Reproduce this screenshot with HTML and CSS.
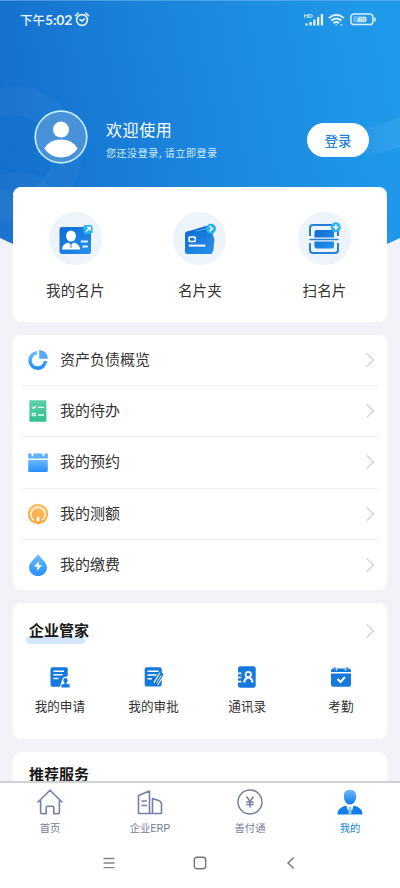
FILE: index.html
```html
<!DOCTYPE html>
<html lang="zh-CN">
<head>
<meta charset="utf-8">
<meta name="viewport" content="width=device-width, initial-scale=1">
<title>我的</title>
<link rel="stylesheet" href="styles.css">
</head>
<body>
<svg class="defs" width="0" height="0" aria-hidden="true">
  <defs>
    <linearGradient id="blue" x1="0" y1="0" x2="1" y2="1"><stop offset="0" stop-color="#0f6cd0"/><stop offset="1" stop-color="#2691ec"/></linearGradient>
    <linearGradient id="sky" x1="0" y1="0" x2="0" y2="1"><stop offset="0" stop-color="#6bb9ff"/><stop offset="1" stop-color="#2590fc"/></linearGradient>
    <linearGradient id="green" x1="0" y1="0" x2="0" y2="1"><stop offset="0" stop-color="#5fd0a9"/><stop offset="1" stop-color="#31c08f"/></linearGradient>
    <linearGradient id="gold" x1="0" y1="0" x2="0" y2="1"><stop offset="0" stop-color="#fbc06a"/><stop offset="1" stop-color="#fba638"/></linearGradient>
    <linearGradient id="user" x1="0" y1="0" x2="0" y2="1"><stop offset="0" stop-color="#6fbbfb"/><stop offset="1" stop-color="#0f7ce6"/></linearGradient>
  </defs>
</svg>
<div class="screen">
  <main class="content">
    <svg class="backdrop" viewBox="0 0 400 300" aria-hidden="true">
      <defs>
        <linearGradient id="hero" gradientUnits="userSpaceOnUse" x1="0" y1="170" x2="390" y2="100"><stop offset="0" stop-color="#146fcd"/><stop offset=".5" stop-color="#1b86dd"/><stop offset="1" stop-color="#2099ea"/></linearGradient>
        <linearGradient id="fade" gradientUnits="userSpaceOnUse" x1="330" y1="0" x2="400" y2="0"><stop offset="0" stop-color="#fff" stop-opacity="0"/><stop offset="1" stop-color="#fff" stop-opacity=".07"/></linearGradient>
        <clipPath id="wedge"><path d="M0 0H400V238L200 330L0 238Z"/></clipPath>
      </defs>
      <g clip-path="url(#wedge)">
        <rect width="400" height="300" fill="url(#hero)"/>
        <circle cx="14" cy="154" r="53" fill="none" stroke="#fff" stroke-opacity=".03" stroke-width="29"/>
        <circle cx="18" cy="218" r="46" fill="#fff" fill-opacity=".03"/>
        <path d="M330 133Q370 130 400 117V147Q370 158 330 155Z" fill="url(#fade)"/>
      </g>
      <path d="M0 .5H400" stroke="#6db5ee" stroke-opacity=".6"/>
    </svg>

    <div class="status">
      <span class="time">下午<b>5:02</b></span>
      <svg width="16" height="15" viewBox="0 0 16 15" fill="none" stroke="#e4f3ff" stroke-width="1.6" stroke-linecap="round"><circle cx="8" cy="8" r="5.4"/><path d="M1.5 3.600 4.300 1.200M14.500 3.600 11.700 1.200M6 7.600 8 9l2.400-1.800"/></svg>
      <span class="spacer"></span>
      <svg class="signal" width="20" height="14" viewBox="0 0 20 14" fill="#e4f3ff"><text x="-.5" y="4.800">HD</text><rect x="1.500" y="10.400" width="2.200" height="2.100"/><rect x="5.400" y="9" width="2.300" height="3.500"/><rect x="9.200" y="6.600" width="2.300" height="5.900"/><rect x="13" y="4" width="2.300" height="8.500"/><rect x="16.800" y="1" width="2.300" height="11.500"/></svg>
      <svg class="wifi" width="17" height="14" viewBox="0 0 17 14" fill="none" stroke="#e4f3ff" stroke-width="1.900"><path d="M.800 5.100Q8.300-1.500 15.900 5.100M3.200 7.700Q8.300 3.300 13.500 7.700M5.600 10.200Q8.300 7.800 11 10.200"/><circle cx="8.300" cy="12" r=".8" fill="#e4f3ff" stroke="none"/><path d="M12.200 12h2.500" stroke-width="1.500" opacity=".65"/></svg>
      <svg class="battery" width="26" height="13" viewBox="0 0 26 13"><rect x=".9" y="1" width="22" height="10.600" rx="3.200" fill="none" stroke="#d5efff" stroke-width="1.500"/><rect x="24" y="4.400" width="1.600" height="4" rx=".7" fill="#e4f3ff"/><rect x="3" y="3" width="13" height="6.600" rx="1.500" fill="#fff" opacity=".3"/><text x="7.500" y="9.200" fill="#f4faff">60</text></svg>
    </div>

    <section class="profile">
      <svg width="54" height="54" viewBox="0 0 54 54"><circle cx="27" cy="27" r="25.800" fill="#4792d9" stroke="#c5ecff" stroke-width="1.700"/><circle cx="27" cy="19.600" r="8" fill="#fff"/><path d="M10.300 38.500Q15.500 29.400 27 29.400Q38.500 29.400 43.700 38.500Q37.500 47.600 27 47.600Q16.500 47.600 10.300 38.500Z" fill="#fff"/></svg>
      <div class="who">
        <h1>欢迎使用</h1>
        <p>您还没登录, 请立即登录</p>
      </div>
      <button class="login">登录</button>
    </section>

    <section class="card shortcuts">
      <a class="shortcut">
        <span class="disc"><svg width="36" height="36" viewBox="0 0 36 36"><rect x="2.500" y="6" width="31.500" height="27" rx="2.800" fill="url(#blue)"/><ellipse cx="14" cy="15" rx="4.900" ry="5.600" fill="#fff"/><path d="M5 28.500Q5 23 11.500 21.500L14 24l2.500-2.500Q23 23 23 28.500Z" fill="#fff"/><path d="M14 23.500v3.500" stroke="#59a9ef" stroke-width="1.200"/><path d="M23.800 20.600h7M25.500 25.500h5.300" stroke="#e4f3ff" stroke-width="2"/><rect x="26.500" y="4" width="9" height="9" rx="2" fill="#2bb4f3"/><path d="M29 10.500 33 6.500M30 6.300h3.200v3.200" fill="none" stroke="#fff" stroke-width="1.300"/></svg></span>
        <span>我的名片</span>
      </a>
      <a class="shortcut">
        <span class="disc"><svg width="36" height="36" viewBox="0 0 36 36"><path d="M4 11 23 5.200Q28.500 4.500 29.500 9L30 13H4Z" fill="#116dd2"/><path d="M13 10.500 25 7.500" stroke="#67b3f3" stroke-width="1"/><path d="M25 9.500 30.500 12 32.500 19Q31.500 23.500 31.500 29L29.500 33H24Z" fill="#2888df"/><rect x="3" y="10.500" width="26.500" height="22.500" rx="2.500" fill="url(#blue)"/><rect x="7" y="16" width="6.300" height="4.500" rx="1" fill="none" stroke="#fff" stroke-width="1.600"/><path d="M7 24.600H23.300" stroke="#fff" stroke-width="2"/><circle cx="29" cy="7.700" r="5" fill="#2bb4f3"/><path d="M27.500 5.200 30.500 7.700 27.500 10.200" fill="none" stroke="#fff" stroke-width="1.500"/></svg></span>
        <span>名片夹</span>
      </a>
      <a class="shortcut">
        <span class="disc"><svg width="36" height="36" viewBox="0 0 36 36"><path d="M4 15V7Q4 4 7 4H29Q32 4 32 7v8M4 22v7Q4 32 7 32H29Q32 32 32 29v-7" fill="none" stroke="#2680d8" stroke-width="2"/><path d="M8.500 10.500 10 9H26.500L28 10.500V16.500H8.500ZM8.500 20.500H28V26L26.500 27.500H10L8.500 26Z" fill="url(#blue)"/><path d="M3.500 18.500H32.500" stroke="#2680d8" stroke-width="1.500"/><circle cx="29.800" cy="6.300" r="5" fill="#2bb4f3"/><path d="M27 6.300h5.600M29.800 3.500v5.600" stroke="#fff" stroke-width="1.600"/></svg></span>
        <span>扫名片</span>
      </a>
    </section>

    <section class="card list">
      <a class="row"><svg width="22" height="22" viewBox="0 0 22 22"><path d="M10 3.800A7.700 7.700 0 1 0 18.400 12" fill="none" stroke="url(#sky)" stroke-width="3.600"/><path d="M12.200.900Q20.500 1.500 21 9.800H12.200Z" fill="#58a9f4"/></svg><span>资产负债概览</span><i class="chevron"></i></a>
      <a class="row"><svg width="22" height="22" viewBox="0 0 22 22"><rect x="2.400" y=".300" width="17" height="21.400" rx="1" fill="url(#green)"/><path d="M5 7 6.500 8.500 9 6M5.400 13.400h2.800v2.200H5.400zM11 7.400h6M11 15h6" fill="none" stroke="#e8fff6" stroke-width="1.400"/></svg><span>我的待办</span><i class="chevron"></i></a>
      <a class="row"><svg width="22" height="22" viewBox="0 0 22 22"><path d="M1.200 2.500H20.800V7.500H1.200Z" fill="#5eb2fc"/><path d="M1.200 8.900H20.800V19.500Q20.800 21 19.300 21H2.700Q1.200 21 1.200 19.500Z" fill="url(#sky)"/><path d="M5.500 2v2.400M16.500 2v2.400" stroke="#fff" stroke-width="1.800" stroke-linecap="round"/></svg><span>我的预约</span><i class="chevron"></i></a>
      <a class="row"><svg width="22" height="22" viewBox="0 0 22 22"><circle cx="11" cy="11" r="10.200" fill="url(#gold)"/><path d="M7 17.300A7.200 7.200 0 1 1 15 17.300" fill="none" stroke="#fff1d7" stroke-width="1.700"/><path d="M9.600 18.200V15Q9.600 13.600 11 13.600t1.400 1.400v3.200Z" fill="#fff"/></svg><span>我的测额</span><i class="chevron"></i></a>
      <a class="row"><svg width="22" height="22" viewBox="0 0 22 22"><path d="M11 .200C13.500 4 20 8.500 20 13.400A9 8.700 0 0 1 2 13.400C2 8.500 8.500 4 11 .200Z" fill="url(#sky)"/><path d="M12 7 7 12.800h3.400L9.800 17 15 11.200h-3.300Z" fill="#fff"/></svg><span>我的缴费</span><i class="chevron"></i></a>
    </section>

    <section class="card manager">
      <header><h2 class="marked">企业管家</h2><i class="chevron"></i></header>
      <div class="tools">
        <a class="tool"><svg width="22" height="22" viewBox="0 0 22 22"><path d="M3.500 1.200H17.200Q18.700 1.200 18.700 2.700V10.500Q13.700 9.800 13 14.500L10.800 20.800H3.500Q1.500 20.800 1.500 18.800V3.200Q1.500 1.200 3.500 1.200Z" fill="#1578dc"/><path d="M4.500 5.300H15M4.500 8.800H13.500M4.500 12.500H9.500" stroke="#fff" stroke-width="1.500"/><path d="M16.500 12a2.300 2.300 0 0 1 1.100 4.300v1.900h3v3.300H12.400v-3.300h3v-1.900A2.300 2.300 0 0 1 16.500 12Z" fill="#1578dc"/></svg><span>我的申请</span></a>
        <a class="tool"><svg width="22" height="22" viewBox="0 0 22 22"><rect x="1.700" y="1.200" width="17" height="19.400" rx="2" fill="#1578dc"/><path d="M4.500 5.300H15.500M4.500 9H13.500M4.500 12.700H9" stroke="#fff" stroke-width="1.500"/><path d="M18.800 8 12.800 17.800" stroke="#fff" stroke-width="5.500"/><path d="M18.600 8.400 13.300 17.300" stroke="#1578dc" stroke-width="3.400" stroke-linecap="round"/><path d="M18.300 9.300 13.700 16.900" stroke="#fff" stroke-width=".8"/></svg><span>我的审批</span></a>
        <a class="tool"><svg width="22" height="22" viewBox="0 0 22 22"><rect x="2" y=".300" width="17.700" height="21.500" rx="2.200" fill="#1578dc"/><path d="M.800 7.400h4.600M.800 11.500h4.600M.800 15.600h4.600" stroke="#fff" stroke-width="1.600"/><path d="M8.300 16.500Q8.300 12.500 12.300 11.500M16.500 16.500Q16.500 12.500 12.300 11.500" fill="none" stroke="#fff" stroke-width="2"/><circle cx="12.300" cy="8.500" r="2.700" fill="#1578dc" stroke="#fff" stroke-width="1.800"/></svg><span>通讯录</span></a>
        <a class="tool"><svg width="22" height="22" viewBox="0 0 22 22"><path d="M1 5Q1 2.500 3 2.500H19Q21 2.500 21 5V6H1ZM1 7.600H21V18.500Q21 20.700 19 20.700H3Q1 20.700 1 18.500Z" fill="#1578dc"/><path d="M5 2 7 4.200M17 2 15 4.200" stroke="#fff" stroke-width="1.500"/><path d="M4.500 1.300 6.200 3.300M17.500 1.300 15.800 3.300" stroke="#1578dc" stroke-width="1.200"/><path d="M7.500 13 10.500 16 15 11" fill="none" stroke="#fff" stroke-width="2"/></svg><span>考勤</span></a>
      </div>
    </section>

    <section class="card recommend"><h2>推荐服务</h2></section>
  </main>

  <nav class="tabs">
    <a class="tab"><svg width="26" height="26" viewBox="0 0 26 26" fill="none" stroke="#7481a5" stroke-width="1.600" stroke-linejoin="round" stroke-linecap="round"><path d="M1 13 13 1.200 25 13M3.600 11.500V23Q3.600 24.700 5.300 24.700H9.200V18.700Q9.200 17.200 10.700 17.200H15.300Q16.800 17.200 16.800 18.700V24.700H20.700Q22.400 24.700 22.400 23V11.500"/></svg><span>首页</span></a>
    <a class="tab"><svg width="26" height="26" viewBox="0 0 26 26" fill="none" stroke="#7481a5" stroke-width="1.600" stroke-linejoin="round"><path d="M1.500 24.500V6.500L12.500 2V24.500ZM15.500 24.500V9.500L21.500 11.500Q24.500 12.500 24.500 15V24.500ZM12.500 24.500h3M4.500 12h5.500M4.500 16.500h5.500"/></svg><span>企业<span class="latin">ERP</span></span></a>
    <a class="tab"><svg width="26" height="26" viewBox="0 0 26 26" fill="none" stroke="#758196" stroke-width="1.500"><circle cx="13" cy="13" r="12"/><path d="M9.500 7.500 13 12.500 16.500 7.500M13 12.500V18.500M9.300 12.900H16.700M9.300 15.500H16.700"/></svg><span>善付通</span></a>
    <a class="tab active"><svg width="26" height="26" viewBox="0 0 26 26"><path d="M13 .700C17.500.700 19.300 3.500 19.100 7.500C19 12 16.500 15.500 13 15.500S7 12 6.900 7.500C6.700 3.500 8.500.700 13 .700Z" fill="url(#user)"/><path d="M.500 25.500C.500 20.500 3 18.500 9 16.500L13 20l4-3.500C23 18.500 25.500 20.500 25.500 25.500Z" fill="#127fe8"/><path d="M9.300 16.400 11 22 13 19 15 22 16.700 16.400 13 18Z" fill="#e6f3ff"/><path d="M12.200 18h1.600l.9 7h-3.400Z" fill="#8cc6fa"/></svg><span>我的</span></a>
  </nav>
  <footer class="keys">
    <svg width="12" height="12" viewBox="0 0 12 12" stroke="#858585" stroke-width="1.300"><path d="M.500 1.500h11M.500 6h11M.500 10.700h11"/></svg>
    <svg width="14" height="14" viewBox="0 0 14 14" fill="none" stroke="#777" stroke-width="1.400"><rect x="1.300" y="1.300" width="11.400" height="11.400" rx="2.700"/></svg>
    <svg width="12" height="14" viewBox="0 0 12 14" fill="none" stroke="#777" stroke-width="1.400"><path d="M8.800 1.500 3 7l5.800 5.500"/></svg>
  </footer>
</div>
</body>
</html>
```
FILE: styles.css
```css
* { box-sizing: border-box; }
body { margin: 0; font-family: "Noto Sans CJK SC", sans-serif; color: #333; }
h1, h2, p { margin: 0; font-weight: 400; }
svg { display: block; flex: none; }
.defs { position: absolute; }
.screen { width: 400px; height: 888px; display: flex; flex-direction: column; background: #fff; overflow: hidden; }
.content { position: relative; height: 783px; flex: none; padding: 0 13px; overflow: hidden; background: #f1f3f8; border-bottom: 2px solid #d0d2d8; }
.backdrop { position: absolute; top: 0; left: 0; width: 400px; height: 300px; }
.status { position: relative; height: 39px; display: flex; align-items: center; padding: 0 11px 0 7px; }
.time { font-size: 12.500px; font-weight: 500; color: #e4f3ff; line-height: 18px; margin-right: 2px; white-space: nowrap; }
.time b { font: 700 14px/18px Lato, sans-serif; letter-spacing: -.2px; }
.spacer { flex: 1; }
.signal text { font: 700 6px Lato, sans-serif; }
.wifi { margin: 0 5px 0 4px; }
.battery text { font: italic 700 8px "Liberation Sans", sans-serif; }
.profile { position: relative; height: 148px; display: flex; padding: 71px 18px 0 21px; }
.who { margin-left: 18px; flex: 1; white-space: nowrap; }
.who h1 { font-size: 16px; line-height: 24px; letter-spacing: .6px; margin-top: 7px; color: #fff; }
.who p { font-size: 10px; line-height: 16px; letter-spacing: .55px; margin-top: 4px; color: #d4ecff; }
.login { width: 62px; height: 34px; margin-top: 13px; padding: 0; border: 0; border-radius: 17px; background: #fff; color: #2382d5; font: 500 13.500px/34px "Noto Sans CJK SC", sans-serif; }
.card { position: relative; background: #fff; border-radius: 8px; margin-bottom: 13px; }
.shortcuts { height: 135px; display: grid; grid-template-columns: repeat(3, 124.600px); padding-top: 25px; }
.shortcut { display: flex; flex-direction: column; align-items: center; gap: 12.500px; font-size: 14.600px; line-height: 24px; }
.disc { width: 53px; height: 53px; border-radius: 50%; background: #edf4fb; display: flex; align-items: center; justify-content: center; }
.list { height: 255px; padding: 0 8px; }
.row { height: 51.200px; display: flex; align-items: center; gap: 11px; padding: 0 4px 0 6px; font-size: 15px; line-height: 24px; border-bottom: 1px solid #f0f0f2; }
.row > span { padding-bottom: 2px; }
.row:last-child { border-bottom: 0; }
.chevron { width: 10px; height: 10px; margin: 0 3px 0 auto; border: solid #c8c8c8; border-width: 1.500px 1.500px 0 0; transform: rotate(45deg); }
.manager { height: 136px; padding: 16px 12px 0 16px; }
.manager header { display: flex; align-items: center; height: 24px; }
h2 { font-size: 15px; line-height: 22px; font-weight: 700; color: #171717; }
.marked { position: relative; z-index: 0; margin-bottom: 2px; }
.marked::before { content: ""; position: absolute; z-index: -1; left: -3px; top: 17px; width: 59px; height: 8px; border-radius: 4px; background: #d4e6fb; }
.tools { display: grid; grid-template-columns: repeat(4, 93.700px); margin: 23px 0 0 -16px; }
.tool { display: flex; flex-direction: column; align-items: center; gap: 8px; font-size: 12.600px; line-height: 20px; }
.recommend { height: 90px; padding: 11px 16px; }
.tabs { height: 62px; flex: none; display: grid; grid-template-columns: repeat(4, 1fr); }
.tab { display: flex; flex-direction: column; align-items: center; padding-top: 6px; gap: 5px; font-size: 10.300px; line-height: 16px; color: #758099; }
.latin { font-family: Roboto, sans-serif; font-size: 11px; }
.tab.active { color: #1485dc; }
.keys { flex: 1; display: flex; align-items: center; justify-content: space-between; padding: 0 103px 7px; }
```
